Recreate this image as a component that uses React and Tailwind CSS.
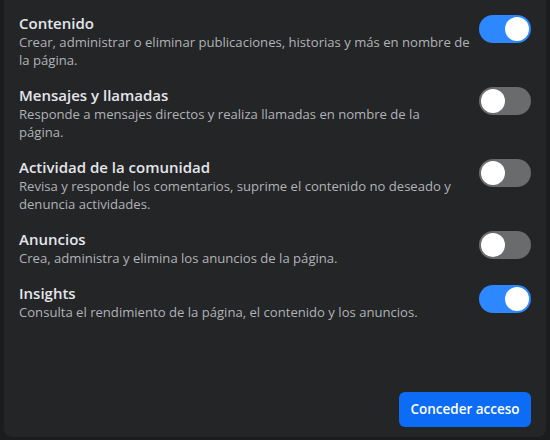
import React, { useState } from "react";

// lines are split the way the dialog wraps them
const items = [
  {
    title: "Contenido",
    desc: ["Crear, administrar o eliminar publicaciones, historias y más en nombre de", "la página."],
    on: true,
  },
  {
    title: "Mensajes y llamadas",
    desc: ["Responde a mensajes directos y realiza llamadas en nombre de la", "página."],
    on: false,
  },
  {
    title: "Actividad de la comunidad",
    desc: ["Revisa y responde los comentarios, suprime el contenido no deseado y", "denuncia actividades."],
    on: false,
  },
  {
    title: "Anuncios",
    desc: ["Crea, administra y elimina los anuncios de la página."],
    on: false,
  },
  {
    title: "Insights",
    desc: ["Consulta el rendimiento de la página, el contenido y los anuncios."],
    on: true,
  },
];

function Toggle({ on, onClick }) {
  return (
    <button
      onClick={onClick}
      className={
        "mt-0.5 shrink-0 w-[52px] h-[28px] rounded-full flex items-center px-[2px] " +
        (on ? "bg-[#2d88ff] justify-end" : "bg-[#6a6b6d] justify-start")
      }
    >
      <span className="block w-[24px] h-[24px] rounded-full bg-white" />
    </button>
  );
}

export default function App() {
  const [state, setState] = useState(items.map((i) => i.on));

  function flip(idx) {
    setState((s) => s.map((v, i) => (i === idx ? !v : v)));
  }

  return (
    <div
      className="w-[550px] h-[440px] bg-[#1b1c1d] px-1 pb-[3px]"
      style={{ fontFamily: '"Open Sans", "Noto Sans", sans-serif' }}
    >
      <div className="h-full bg-[#242526] rounded-b-lg flex flex-col px-[15px] pt-[13px] pb-[10px]">
        <div className="flex flex-col gap-4">
          {items.map((it, i) => (
            <div key={it.title} className="flex items-start gap-2">
              <div className="flex-1 min-w-0">
                <div className="text-[15px] leading-[20px] font-semibold text-[#e4e6eb]">{it.title}</div>
                {it.desc.map((line) => (
                  <div key={line} className="text-[13.1px] leading-[18px] text-[#b0b3b8] whitespace-nowrap">
                    {line}
                  </div>
                ))}
              </div>
              <Toggle on={state[i]} onClick={() => flip(i)} />
            </div>
          ))}
        </div>
        <div className="mt-auto flex justify-end">
          <button className="h-[35px] w-[132px] rounded-md bg-[#0c6cf5] text-white text-[13.5px] font-semibold">
            Conceder acceso
          </button>
        </div>
      </div>
    </div>
  );
}
